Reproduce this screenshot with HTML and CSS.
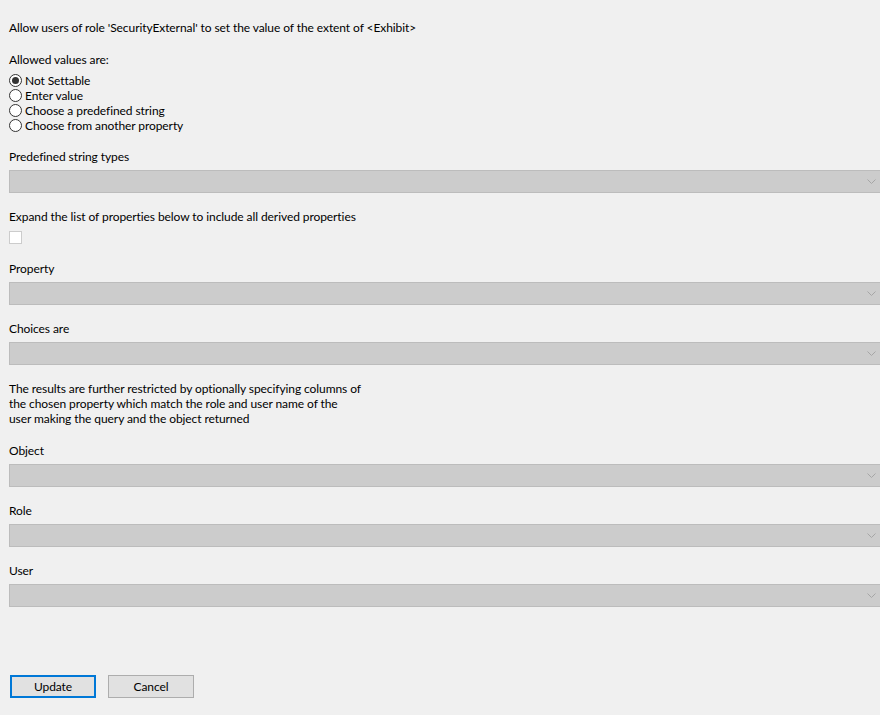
FILE: index.html
```html
<!DOCTYPE html>
<html lang="en">
<head>
    <meta charset="UTF-8">
    <title>Set value</title>
    <link rel="stylesheet" href="styles.css">
</head>
<body>

<div class="form">
    <p class="line">Allow users of role 'SecurityExternal' to set the value of the extent of &lt;Exhibit&gt;</p>

    <p class="line section">Allowed values are:</p>
    <div class="radios">
        <label class="radio"><span class="dot checked"></span>Not Settable</label>
        <label class="radio"><span class="dot"></span>Enter value</label>
        <label class="radio"><span class="dot"></span>Choose a predefined string</label>
        <label class="radio"><span class="dot"></span>Choose from another property</label>
    </div>

    <div class="field">
        <p class="line">Predefined string types</p>
        <div class="combo"><svg class="chev" width="9" height="5" viewBox="0 0 9 5"><path d="M0.5 0.5 L4.5 4.5 L8.5 0.5" fill="none" stroke="#a6a6a6" stroke-width="1"/></svg></div>
    </div>

    <div class="field checkfield">
        <p class="line">Expand the list of properties below to include all derived properties</p>
        <span class="check"></span>
    </div>

    <div class="field">
        <p class="line">Property</p>
        <div class="combo"><svg class="chev" width="9" height="5" viewBox="0 0 9 5"><path d="M0.5 0.5 L4.5 4.5 L8.5 0.5" fill="none" stroke="#a6a6a6" stroke-width="1"/></svg></div>
    </div>

    <div class="field">
        <p class="line">Choices are</p>
        <div class="combo"><svg class="chev" width="9" height="5" viewBox="0 0 9 5"><path d="M0.5 0.5 L4.5 4.5 L8.5 0.5" fill="none" stroke="#a6a6a6" stroke-width="1"/></svg></div>
    </div>

    <p class="line para">The results are further restricted by optionally specifying columns of<br>
        the chosen property which match the role and user name of the<br>
        user making the query and the object returned</p>

    <div class="field">
        <p class="line">Object</p>
        <div class="combo"><svg class="chev" width="9" height="5" viewBox="0 0 9 5"><path d="M0.5 0.5 L4.5 4.5 L8.5 0.5" fill="none" stroke="#a6a6a6" stroke-width="1"/></svg></div>
    </div>

    <div class="field">
        <p class="line">Role</p>
        <div class="combo"><svg class="chev" width="9" height="5" viewBox="0 0 9 5"><path d="M0.5 0.5 L4.5 4.5 L8.5 0.5" fill="none" stroke="#a6a6a6" stroke-width="1"/></svg></div>
    </div>

    <div class="field">
        <p class="line">User</p>
        <div class="combo"><svg class="chev" width="9" height="5" viewBox="0 0 9 5"><path d="M0.5 0.5 L4.5 4.5 L8.5 0.5" fill="none" stroke="#a6a6a6" stroke-width="1"/></svg></div>
    </div>

    <div class="buttons">
        <button class="btn primary">Update</button>
        <button class="btn">Cancel</button>
    </div>
</div>

</body>
</html>
```

FILE: styles.css
```css
html, body {
    margin: 0;
    background-color: #f0f0f0;
}
body {
    font-family: Lato, "Open Sans", sans-serif;
    font-size: 12px;
    line-height: 15px;
    letter-spacing: -0.08px;
    color: #000;
}
.form {
    padding: 20px 0 0 9px;
}
.line {
    margin: 0;
    white-space: nowrap;
}
.section {
    margin-top: 17px;
}
.para {
    margin-top: 16px;
    margin-bottom: 17px;
}
.radios {
    margin-top: 6px;
}
.radio {
    display: flex;
    align-items: center;
    height: 15px;
    gap: 3px;
}
.dot {
    box-sizing: border-box;
    width: 13px;
    height: 13px;
    border: 1px solid #333;
    border-radius: 50%;
    background: #fff;
    display: flex;
    align-items: center;
    justify-content: center;
}
.dot.checked::after {
    content: "";
    width: 7px;
    height: 7px;
    border-radius: 50%;
    background: #333;
}
.field {
    margin-top: 16px;
}
.field .line {
    margin-bottom: 6px;
}
.checkfield {
    margin-bottom: 17px;
}
.combo {
    box-sizing: border-box;
    height: 23px;
    border: 1px solid #bcbcbc;
    border-right: none;
    background: #cccccc;
    display: flex;
    align-items: center;
    justify-content: flex-end;
    padding-right: 4px;
}
.chev {
    display: block;
}
.check {
    display: block;
    box-sizing: border-box;
    width: 13px;
    height: 13px;
    margin-top: 7px;
    border: 1px solid #cccccc;
    background: #fff;
}
.buttons {
    display: flex;
    gap: 12px;
    margin-top: 68px;
    padding-left: 1px;
}
.btn {
    box-sizing: border-box;
    width: 86px;
    height: 23px;
    margin: 0;
    font-family: inherit;
    font-size: 12px;
    letter-spacing: inherit;
    color: #000;
    background: #e1e1e1;
    border: 1px solid #adadad;
    border-radius: 0;
}
.btn.primary {
    border: 2px solid #0078d7;
}
```
